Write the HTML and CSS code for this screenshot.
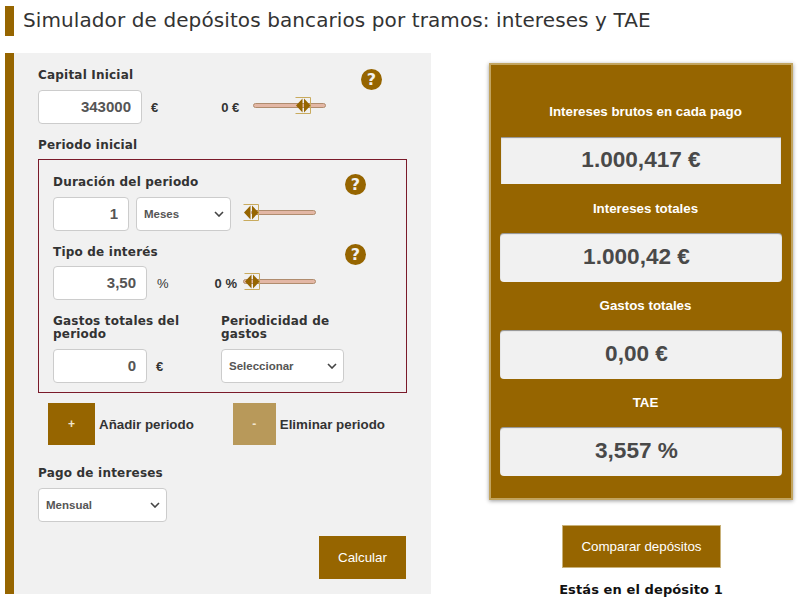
FILE: index.html
```html
<!DOCTYPE html>
<html lang="es">
<head>
    <meta charset="UTF-8">
    <meta name="viewport" content="width=device-width, initial-scale=1.0">
    <title>Simulador de depósitos bancarios por tramos</title>
    <link rel="stylesheet" href="styles.css">
</head>
<body>

<header class="title-bar">
    <h1>Simulador de depósitos bancarios por tramos: intereses y TAE</h1>
</header>

<div class="page">
    <form class="panel">
        <div class="head-row">
            <label class="field-label">Capital Inicial</label>
            <span class="help help-capital">?</span>
        </div>
        <div class="row row-capital">
            <input class="num num-capital" type="text" value="343000">
            <span class="unit">€</span>
            <span class="min min-capital">0 €</span>
            <div class="slider slider-capital"><span class="track"></span>
                <svg class="thumb" style="left: 41px" width="18" height="17" viewBox="0 0 18 17"><path d="M1.5 .5h15M1.5 16.5h15M16.5 .5v16" fill="none" stroke="#c9ab5e"/><path d="M8.5 1.5v14L2 8.5zM10 1.5v14l6.5-7z" fill="#966500"/></svg>
            </div>
        </div>

        <label class="field-label label-period">Periodo inicial</label>
        <div class="period-box">
            <div class="head-row">
                <label class="field-label">Duración del periodo</label>
                <span class="help help-period">?</span>
            </div>
            <div class="row row-duration">
                <input class="num num-duration" type="text" value="1">
                <div class="pick-wrap pick-months">
                    <select class="pick"><option>Meses</option></select>
                    <svg class="chevron" width="10" height="6" viewBox="0 0 10 6"><path d="M1 1l4 4 4-4" fill="none" stroke="#444" stroke-width="1.6"/></svg>
                </div>
                <div class="slider slider-duration"><span class="track"></span>
                    <svg class="thumb" style="left: -9px" width="18" height="17" viewBox="0 0 18 17"><path d="M1.5 .5h15M1.5 16.5h15M16.5 .5v16" fill="none" stroke="#c9ab5e"/><path d="M8.5 1.5v14L2 8.5zM10 1.5v14l6.5-7z" fill="#966500"/></svg>
                </div>
            </div>
            <div class="head-row head-rate">
                <label class="field-label">Tipo de interés</label>
                <span class="help help-period">?</span>
            </div>
            <div class="row row-rate">
                <input class="num num-small" type="text" value="3,50">
                <span class="unit unit-plain">%</span>
                <span class="min min-rate">0 %</span>
                <div class="slider slider-rate"><span class="track"></span>
                    <svg class="thumb" style="left: 0" width="18" height="17" viewBox="0 0 18 17"><path d="M1.5 .5h15M1.5 16.5h15M16.5 .5v16" fill="none" stroke="#c9ab5e"/><path d="M8.5 1.5v14L2 8.5zM10 1.5v14l6.5-7z" fill="#966500"/></svg>
                </div>
            </div>
            <div class="cost-grid">
                <div class="cost-col">
                    <label class="field-label">Gastos totales del periodo</label>
                    <div class="row">
                        <input class="num num-small" type="text" value="0">
                        <span class="unit">€</span>
                    </div>
                </div>
                <div class="cost-col cost-col-right">
                    <label class="field-label">Periodicidad de gastos</label>
                    <div class="pick-wrap pick-freq">
                        <select class="pick"><option>Seleccionar</option></select>
                        <svg class="chevron" width="10" height="6" viewBox="0 0 10 6"><path d="M1 1l4 4 4-4" fill="none" stroke="#444" stroke-width="1.6"/></svg>
                    </div>
                </div>
            </div>
        </div>

        <div class="period-actions">
            <button type="button" class="square-btn btn-add">+</button>
            <span class="action-text">Añadir periodo</span>
            <button type="button" class="square-btn btn-remove">-</button>
            <span class="action-text">Eliminar periodo</span>
        </div>

        <label class="field-label label-pay">Pago de intereses</label>
        <div class="pick-wrap pick-pay">
            <select class="pick"><option>Mensual</option></select>
            <svg class="chevron" width="10" height="6" viewBox="0 0 10 6"><path d="M1 1l4 4 4-4" fill="none" stroke="#444" stroke-width="1.6"/></svg>
        </div>

        <div class="submit-row">
            <button type="button" class="btn btn-calc">Calcular</button>
        </div>
    </form>

    <aside class="side">
        <div class="results">
            <h3 class="result-label">Intereses brutos en cada pago</h3>
            <div class="result-value first-value">1.000,417 €</div>
            <h3 class="result-label">Intereses totales</h3>
            <div class="result-value">1.000,42 €</div>
            <h3 class="result-label">Gastos totales</h3>
            <div class="result-value">0,00 €</div>
            <h3 class="result-label">TAE</h3>
            <div class="result-value">3,557 %</div>
        </div>
        <button type="button" class="btn btn-compare">Comparar depósitos</button>
        <p class="current">Estás en el depósito 1</p>
    </aside>
</div>

</body>
</html>
```

FILE: styles.css
```css
* {
    box-sizing: border-box;
}
body {
    margin: 0;
    font-family: "Liberation Sans", Arial, sans-serif;
    background: #fff;
    color: #333;
    overflow: hidden;
}
.title-bar {
    margin: 6px 0 0 5px;
    height: 30px;
    border-left: 9px solid #966500;
    padding-left: 9px;
}
.title-bar h1 {
    margin: 0;
    font-family: "DejaVu Sans", Verdana, sans-serif;
    font-size: 20px;
    font-weight: 400;
    letter-spacing: 0.1px;
    line-height: 30px;
    color: #333;
    white-space: nowrap;
    position: relative;
    top: -1px;
}
.page {
    display: flex;
    margin: 17px 0 0 5px;
}
.panel {
    width: 426px;
    height: 541px;
    background: #f1f1f1;
    border-left: 9px solid #966500;
    padding: 13px 24px 0 24px;
}
.field-label {
    display: block;
    font-family: "DejaVu Sans", Verdana, sans-serif;
    font-size: 12px;
    font-weight: 700;
    letter-spacing: 0.2px;
    line-height: 13px;
    color: #333;
}
.head-row {
    display: flex;
    justify-content: space-between;
    align-items: flex-start;
    height: 24px;
    padding-top: 3px;
}
.help {
    width: 21px;
    height: 21px;
    border-radius: 50%;
    background: #966500;
    color: #f1f1f1;
    font-family: "DejaVu Sans", sans-serif;
    font-size: 16px;
    font-weight: 700;
    line-height: 21px;
    text-align: center;
}
.help-capital {
    margin-right: 25px;
}
.help-period {
    margin-right: 26px;
    margin-top: -2px;
}
.row {
    display: flex;
    align-items: center;
}
.num {
    height: 34px;
    border: 1px solid #ccc;
    border-radius: 4px;
    background: #fff;
    padding: 0 10px 2px;
    font-family: "Liberation Sans", Arial, sans-serif;
    font-size: 15px;
    font-weight: 700;
    color: #555;
    text-align: right;
}
.num-capital {
    width: 104px;
}
.num-duration {
    width: 76px;
}
.num-small {
    width: 94px;
}
.unit {
    margin-left: 9px;
    font-size: 13px;
    font-weight: 700;
}
.unit-plain {
    margin-left: 10px;
    font-weight: 400;
}
.min {
    font-size: 13px;
    font-weight: 700;
}
.min-capital {
    margin-left: 63px;
}
.min-rate {
    margin-left: 46px;
}
.slider {
    position: relative;
    height: 18px;
}
.track {
    position: absolute;
    left: 0;
    right: 0;
    top: 5px;
    height: 5px;
    background: #e3b7a5;
    border: 1px solid #b08c6e;
    border-radius: 3px;
}
.thumb {
    position: absolute;
    top: -1px;
}
.slider-capital {
    width: 73px;
    margin-left: 14px;
}
.slider-duration {
    width: 65px;
    margin-left: 20px;
}
.slider-rate {
    width: 73px;
    margin-left: 6px;
}
.pick-wrap {
    position: relative;
    height: 34px;
}
.pick {
    display: block;
    width: 100%;
    height: 34px;
    appearance: none;
    border: 1px solid #ccc;
    border-radius: 4px;
    background: #fff;
    padding-left: 7px;
    font-family: "Liberation Sans", Arial, sans-serif;
    font-size: 11.5px;
    font-weight: 700;
    color: #555;
}
.chevron {
    position: absolute;
    right: 7px;
    top: 14px;
    pointer-events: none;
}
.pick-months {
    width: 95px;
    margin-left: 7px;
}
.pick-freq {
    width: 123px;
}
.pick-pay {
    width: 129px;
}
.label-period {
    margin-top: 15px;
}
.period-box {
    width: 369px;
    height: 234px;
    margin-top: 7px;
    border: 1px solid #7a1a2a;
    padding: 13px 14px 0;
}
.head-rate {
    margin-top: 12px;
    height: 23px;
}
.cost-grid {
    display: flex;
    margin-top: 15px;
}
.cost-col {
    width: 168px;
}
.cost-col .field-label {
    height: 34px;
}
.cost-col-right {
    width: 140px;
}
.period-actions {
    display: flex;
    align-items: center;
    margin: 10px 0 0 10px;
}
.square-btn {
    height: 42px;
    border: 0;
    color: #f1e6cf;
    font-family: "Liberation Sans", Arial, sans-serif;
    font-size: 12px;
    font-weight: 700;
}
.btn-add {
    width: 47px;
    background: #966500;
}
.btn-remove {
    width: 43px;
    margin-left: 39px;
    background: #b8995a;
}
.action-text {
    margin-left: 4px;
    font-size: 13.33px;
    font-weight: 700;
    white-space: nowrap;
}
.label-pay {
    margin-top: 22px;
    margin-bottom: 8px;
}
.submit-row {
    display: flex;
    justify-content: flex-end;
    margin: 14px 1px 0 0;
}
.btn {
    border: 1px solid #c9b27a;
    background: #966500;
    color: #fff;
    font-family: "Liberation Sans", Arial, sans-serif;
    font-size: 13.33px;
    height: 43px;
}
.btn-calc {
    width: 87px;
    border: 0;
}
.side {
    margin-left: 58px;
    margin-top: 10px;
    width: 304px;
    display: flex;
    flex-direction: column;
    align-items: center;
}
.results {
    width: 304px;
    height: 437px;
    background: #966500;
    border: 2px solid #c2a45f;
    box-shadow: 0 1px 4px rgba(0, 0, 0, 0.4);
    padding: 39px 9px 0;
}
.result-label {
    margin: 0;
    height: 16px;
    padding-left: 9px;
    font-size: 13.33px;
    font-weight: 700;
    line-height: 16px;
    color: #fff;
    text-align: center;
}
.result-value {
    height: 49px;
    margin: 16px 0;
    padding-right: 9px;
    background: #f1f1f1;
    border-radius: 4px;
    box-shadow: inset 0 1px 1px rgba(0, 0, 0, 0.4);
    font-size: 22.6px;
    font-weight: 700;
    line-height: 48px;
    color: #494949;
    text-align: center;
}
.first-value {
    height: 47px;
    margin: 17px 1px;
    padding-right: 0;
    border-radius: 0;
    line-height: 46px;
}
.btn-compare {
    width: 159px;
    margin-top: 25px;
    margin-left: 1px;
}
.current {
    margin: 14px 0 0;
    font-family: "DejaVu Sans", Verdana, sans-serif;
    font-size: 13px;
    font-weight: 700;
    letter-spacing: 0.1px;
    color: #111;
}
```
